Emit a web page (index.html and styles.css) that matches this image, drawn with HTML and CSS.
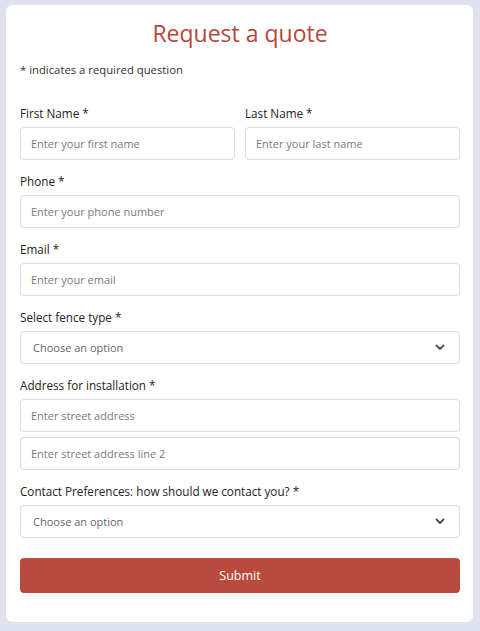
FILE: index.html
```html
<!DOCTYPE html>
<html lang="en">
<head>
<meta charset="utf-8">
<title>Request a quote</title>
<link rel="stylesheet" href="styles.css">
</head>
<body>
<form class="card">
  <h1 class="title">Request a quote</h1>
  <p class="note">* indicates a required question</p>

  <div class="row">
    <div class="field">
      <label class="label">First Name *</label>
      <input class="input" type="text" placeholder="Enter your first name">
    </div>
    <div class="field">
      <label class="label">Last Name *</label>
      <input class="input" type="text" placeholder="Enter your last name">
    </div>
  </div>

  <div class="field">
    <label class="label">Phone *</label>
    <input class="input" type="text" placeholder="Enter your phone number">
  </div>

  <div class="field">
    <label class="label">Email *</label>
    <input class="input" type="text" placeholder="Enter your email">
  </div>

  <div class="field">
    <label class="label">Select fence type *</label>
    <div class="select-wrap">
      <select class="select"><option>Choose an option</option></select>
      <svg class="chev" width="10" height="7" viewBox="0 0 10 7"><path d="M1.5 1.5 L5 5 L8.5 1.5" fill="none" stroke="#555" stroke-width="2" stroke-linecap="round" stroke-linejoin="round"/></svg>
    </div>
  </div>

  <div class="field">
    <label class="label">Address for installation *</label>
    <div class="stack">
      <input class="input" type="text" placeholder="Enter street address">
      <input class="input" type="text" placeholder="Enter street address line 2">
    </div>
  </div>

  <div class="field">
    <label class="label">Contact Preferences: how should we contact you? *</label>
    <div class="select-wrap">
      <select class="select"><option>Choose an option</option></select>
      <svg class="chev" width="10" height="7" viewBox="0 0 10 7"><path d="M1.5 1.5 L5 5 L8.5 1.5" fill="none" stroke="#555" stroke-width="2" stroke-linecap="round" stroke-linejoin="round"/></svg>
    </div>
  </div>

  <button class="submit" type="button">Submit</button>
</form>
</body>
</html>
```

FILE: styles.css
```css
* { box-sizing: border-box; }

html, body {
  margin: 0;
  padding: 0;
}

body {
  background: #dee1ee;
  font-family: "Open Sans", "Noto Sans", sans-serif;
  color: #222;
  padding: 5px 7px 10px 6px;
}

.card {
  background: #fff;
  border-radius: 6px;
  padding: 15px 13px 29px 14px;
  display: flex;
  flex-direction: column;
  gap: 13px;
}

.title {
  margin: 0;
  text-align: center;
  font-size: 23px;
  font-weight: 500;
  line-height: 26px;
  color: #b5473d;
}

.note {
  margin: 3px 0 14px;
  font-size: 11.3px;
  line-height: 16px;
  color: #333;
}

.row {
  display: grid;
  grid-template-columns: 1fr 1fr;
  gap: 10px;
}

.field {
  display: flex;
  flex-direction: column;
  gap: 6px;
}

.label {
  font-size: 11.7px;
  line-height: 16px;
  color: #222;
}

.stack {
  display: flex;
  flex-direction: column;
  gap: 5px;
}

.input,
.select {
  width: 100%;
  height: 33px;
  border: 1px solid #dcdcdc;
  border-radius: 4px;
  background: #fff;
  padding: 0 10px;
  font-family: inherit;
  font-size: 11px;
  color: #333;
  outline: none;
}

.input::placeholder {
  color: #7a7a7a;
}

.select-wrap {
  position: relative;
}

.select {
  appearance: none;
  -webkit-appearance: none;
  padding: 0 12px;
  color: #666;
}

.chev {
  position: absolute;
  right: 15px;
  top: 13px;
  pointer-events: none;
}

.submit {
  margin-top: 7px;
  height: 35px;
  border: none;
  border-radius: 4px;
  background: #b84a3e;
  color: #fff;
  font-family: inherit;
  font-size: 12.5px;
  font-weight: 500;
}
```
